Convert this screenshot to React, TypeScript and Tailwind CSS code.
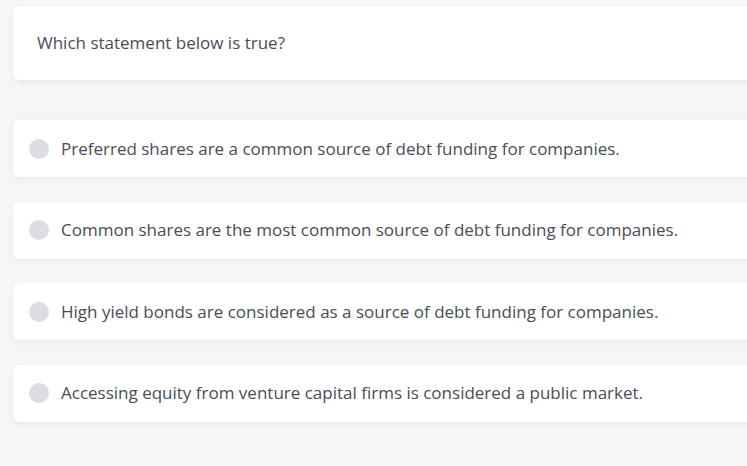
const options = [
  'Preferred shares are a common source of debt funding for companies.',
  'Common shares are the most common source of debt funding for companies.',
  'High yield bonds are considered as a source of debt funding for companies.',
  'Accessing equity from venture capital firms is considered a public market.',
];

export default function App() {
  return (
    <div
      className="h-[466px] w-full overflow-hidden bg-[#f5f6f8] text-[#4a4d55]"
      style={{ fontFamily: '"Open Sans", "Noto Sans", sans-serif' }}
    >
      <div className="-mr-8 pl-[13px] pt-[6px]">
        <div className="flex h-[74px] items-center rounded-md bg-white pl-6 text-[17px] shadow-[0_2px_6px_rgba(0,0,0,0.06)]">
          Which statement below is true?
        </div>
        <div className="mt-10 flex flex-col gap-[24.5px]">
          {options.map((o) => (
            <label
              key={o}
              className="flex h-[57px] cursor-pointer items-center gap-3 rounded-md bg-white pl-4 text-[17px] shadow-[0_2px_6px_rgba(0,0,0,0.06)]"
            >
              <span className="h-5 w-5 shrink-0 rounded-full bg-[#dcdde0]" />
              <span>{o}</span>
            </label>
          ))}
        </div>
      </div>
    </div>
  );
}
